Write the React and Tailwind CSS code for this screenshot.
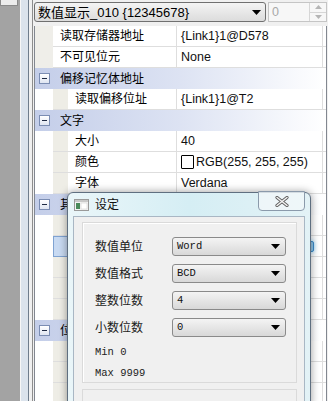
import React from "react";

const rows = [
  { type: "item", label: "读取存储器地址", value: "{Link1}1@D578", top: true },
  { type: "item", label: "不可见位元", value: "None", top: true },
  { type: "cat", label: "偏移记忆体地址" },
  { type: "item", label: "读取偏移位址", value: "{Link1}1@T2" },
  { type: "cat", label: "文字" },
  { type: "item", label: "大小", value: "40" },
  { type: "item", label: "颜色", value: "RGB(255, 255, 255)", swatch: true },
  { type: "item", label: "字体", value: "Verdana" },
  { type: "cat", label: "其他" },
  { type: "item", label: "", value: "" },
  { type: "item", label: "", value: "", selected: true },
  { type: "item", label: "", value: "" },
  { type: "item", label: "", value: "" },
  { type: "item", label: "", value: "" },
  { type: "cat", label: "位置" },
  { type: "item", label: "", value: "" },
  { type: "item", label: "", value: "" },
  { type: "item", label: "", value: "" },
];

function Minus() {
  return (
    <div className="w-[11px] h-[11px] border border-[#7b8db3] bg-gradient-to-b from-white to-[#dfe5f2] flex items-center justify-center">
      <div className="w-[5px] h-[1px] bg-[#1e2a44]" />
    </div>
  );
}

function Category({ label }) {
  return (
    <div className="flex items-center h-[21px] shrink-0 bg-gradient-to-r from-[#c4cee9] via-[#dde3f3] to-white">
      <div className="w-[18px] flex justify-center pl-[1px]">
        <Minus />
      </div>
      <span className="pl-[7px] text-[12px] text-black leading-none">{label}</span>
    </div>
  );
}

function Item({ row }) {
  const { label, value, top, selected, swatch } = row;
  return (
    <div className="flex h-[21px] shrink-0">
      <div className={top ? "w-[18px] bg-[#efeee9]" : "w-[18px] bg-white"} />
      {!top && (
        <div
          className={
            selected
              ? "w-[15px] bg-[#c8daf2] border border-[#7fa3d2]"
              : "w-[15px] bg-[#eeede6] border-b border-[#dedede]"
          }
        />
      )}
      <div
        className={
          (top ? "w-[124px] pl-[7px]" : "w-[109px] pl-[7px]") +
          " flex items-center border-b border-r border-[#dedede] bg-white text-[12px] leading-none text-black"
        }
      >
        {label}
      </div>
      <div className="flex-1 flex items-center pl-[4px] border-b border-[#dedede] bg-white text-[12.5px] leading-none text-[#111]">
        {swatch && <div className="w-[13px] h-[14px] border border-black rounded-[1px] mr-[2px] bg-white" />}
        {value}
        {selected && (
          <div className="ml-auto mr-[8px] w-[16px] h-[11px] rounded-[2px] bg-[#8fc6ea] border border-[#3b8ccc] shadow-[0_0_4px_#7fd0ff]" />
        )}
        <div className={selected ? "w-[1px] self-stretch bg-[#dedede] mr-[3px]" : "ml-auto w-[1px] self-stretch bg-[#dedede] mr-[3px]"} />
      </div>
    </div>
  );
}

function DropArrow() {
  return (
    <svg width="9" height="5" viewBox="0 0 9 5">
      <path d="M0 0h9L4.5 5z" fill="#000" />
    </svg>
  );
}

function Select({ value }) {
  return (
    <div className="w-[114px] h-[19px] rounded-[3px] border border-[#8a8a8a] bg-gradient-to-b from-[#f4f4f4] to-[#d8d8d8] flex items-center pl-[4px] pr-[5px]">
      <span className="font-['Liberation_Mono',monospace] text-[10.5px] text-[#111] leading-none">{value}</span>
      <div className="ml-auto">
        <DropArrow />
      </div>
    </div>
  );
}

function Field({ label, value }) {
  return (
    <div className="flex items-center h-[19px]">
      <span className="w-[77px] text-[12px] text-[#1a1a1a] leading-none">{label}</span>
      <Select value={value} />
    </div>
  );
}

function Dialog() {
  return (
    <div className="absolute left-[67px] top-[192px] w-[244px] h-[215px] rounded-t-[6px] border border-[#5f6f80] bg-gradient-to-r from-[#eaf6f9] via-[#d5eef4] to-[#e3f2f6] shadow-[0_0_9px_rgba(0,0,0,0.4)] flex flex-col">
      <div className="h-[23px] shrink-0 flex items-center pl-[6px] relative">
        <svg width="15" height="12" viewBox="0 0 15 12">
          <rect x="0.5" y="0.5" width="14" height="11" fill="#f4f4f4" stroke="#9a9a9a" />
          <rect x="1" y="1" width="13" height="2" fill="#c9c9c9" />
          <rect x="2" y="4" width="4" height="6" fill="#4a8a5a" />
          <rect x="7" y="4" width="6" height="6" fill="#ffffff" stroke="#c8c8c8" strokeWidth="0.5" />
        </svg>
        <span className="ml-[6px] text-[12px] text-[#111] leading-none">设定</span>
        <div className="absolute right-[5px] top-[-2px] w-[47px] h-[20px] rounded-b-[4px] border border-[#8b9aab] bg-[#f1f8fa]/80 flex items-center justify-center">
          <svg width="14" height="11" viewBox="0 0 14 11">
            <path d="M2 1.5L12 9.5M12 1.5L2 9.5" stroke="#5c5c5c" strokeWidth="3.2" strokeLinecap="round" />
            <path d="M2 1.5L12 9.5M12 1.5L2 9.5" stroke="#f4f4f4" strokeWidth="1.5" strokeLinecap="round" />
          </svg>
        </div>
      </div>
      <div className="flex-1 min-h-0 mx-[5px] border border-[#a9b7c4] bg-[#f0f0f0] pl-[8px] pr-[7px] pt-[5px] flex flex-col overflow-hidden">
        <div className="h-[161px] shrink-0 border border-[#dadada] shadow-[inset_1px_1px_0_#ffffff] pl-[12px] pt-[14px] flex flex-col">
          <div className="flex flex-col gap-[8px]">
            <Field label="数值单位" value="Word" />
            <Field label="数值格式" value="BCD" />
            <Field label="整数位数" value="4" />
            <Field label="小数位数" value="0" />
          </div>
          <div className="mt-[10px] font-['Liberation_Mono',monospace] text-[10.5px] text-[#222] leading-none flex flex-col gap-[10px]">
            <span>Min 0</span>
            <span>Max 9999</span>
          </div>
        </div>
        <div className="mt-[6px] h-[30px] shrink-0 border border-[#dadada]" />
      </div>
    </div>
  );
}

export default function App() {
  return (
    <div className="relative w-[328px] h-[401px] overflow-hidden flex bg-[#f0f0f0] font-['Liberation_Sans','Noto_Sans_CJK_SC',sans-serif]">
      <div className="w-[20px] bg-[#a3a3a3] flex flex-col">
        <div className="w-[18px] h-[6px] border border-t-0 border-[#8a8a8a] bg-[#ececec]" />
      </div>
      <div className="w-[1px] bg-[#f7f7f7]" />
      <div className="w-[7px] bg-[#dbe3ec]" />
      <div className="w-[1px] bg-[#6f7d8c]" />
      <div className="w-[3px] bg-[#f0f0f0]" />
      <div className="w-[1px] bg-[#8d8d8d]" />
      <div className="flex-1 flex flex-col">
        <div className="h-[26px] flex pt-[2px] pl-[1px] gap-[2px] shrink-0">
          <div className="w-[232px] h-[20px] rounded-[3px] border border-[#707070] bg-gradient-to-b from-[#f4f4f4] to-[#dcdcdc] flex items-center pl-[3px] pr-[4px]">
            <span className="text-[13px] text-black leading-none whitespace-nowrap">数值显示_010 {"{12345678}"}</span>
            <div className="ml-auto">
              <DropArrow />
            </div>
          </div>
          <div className="w-[59px] h-[20px] border border-[#c5c5c5] bg-[#f7f7f7] flex items-center pl-[3px]">
            <span className="text-[12.5px] text-[#a8a8a8] leading-none">0</span>
            <div className="ml-auto h-full w-[17px] flex flex-col border-l border-[#d6d6d6]">
              <div className="flex-1 flex items-center justify-center border-b border-[#d6d6d6]">
                <svg width="7" height="4" viewBox="0 0 7 4"><path d="M0 4h7L3.5 0z" fill="#b5b5b5" /></svg>
              </div>
              <div className="flex-1 flex items-center justify-center">
                <svg width="7" height="4" viewBox="0 0 7 4"><path d="M0 0h7L3.5 4z" fill="#b5b5b5" /></svg>
              </div>
            </div>
          </div>
        </div>
        <div className="flex-1 mx-[1px] border-l border-r border-[#828790] bg-white flex flex-col overflow-hidden">
          {rows.map((row, i) =>
            row.type === "cat" ? <Category key={i} label={row.label} /> : <Item key={i} row={row} />
          )}
        </div>
      </div>
      <Dialog />
    </div>
  );
}
